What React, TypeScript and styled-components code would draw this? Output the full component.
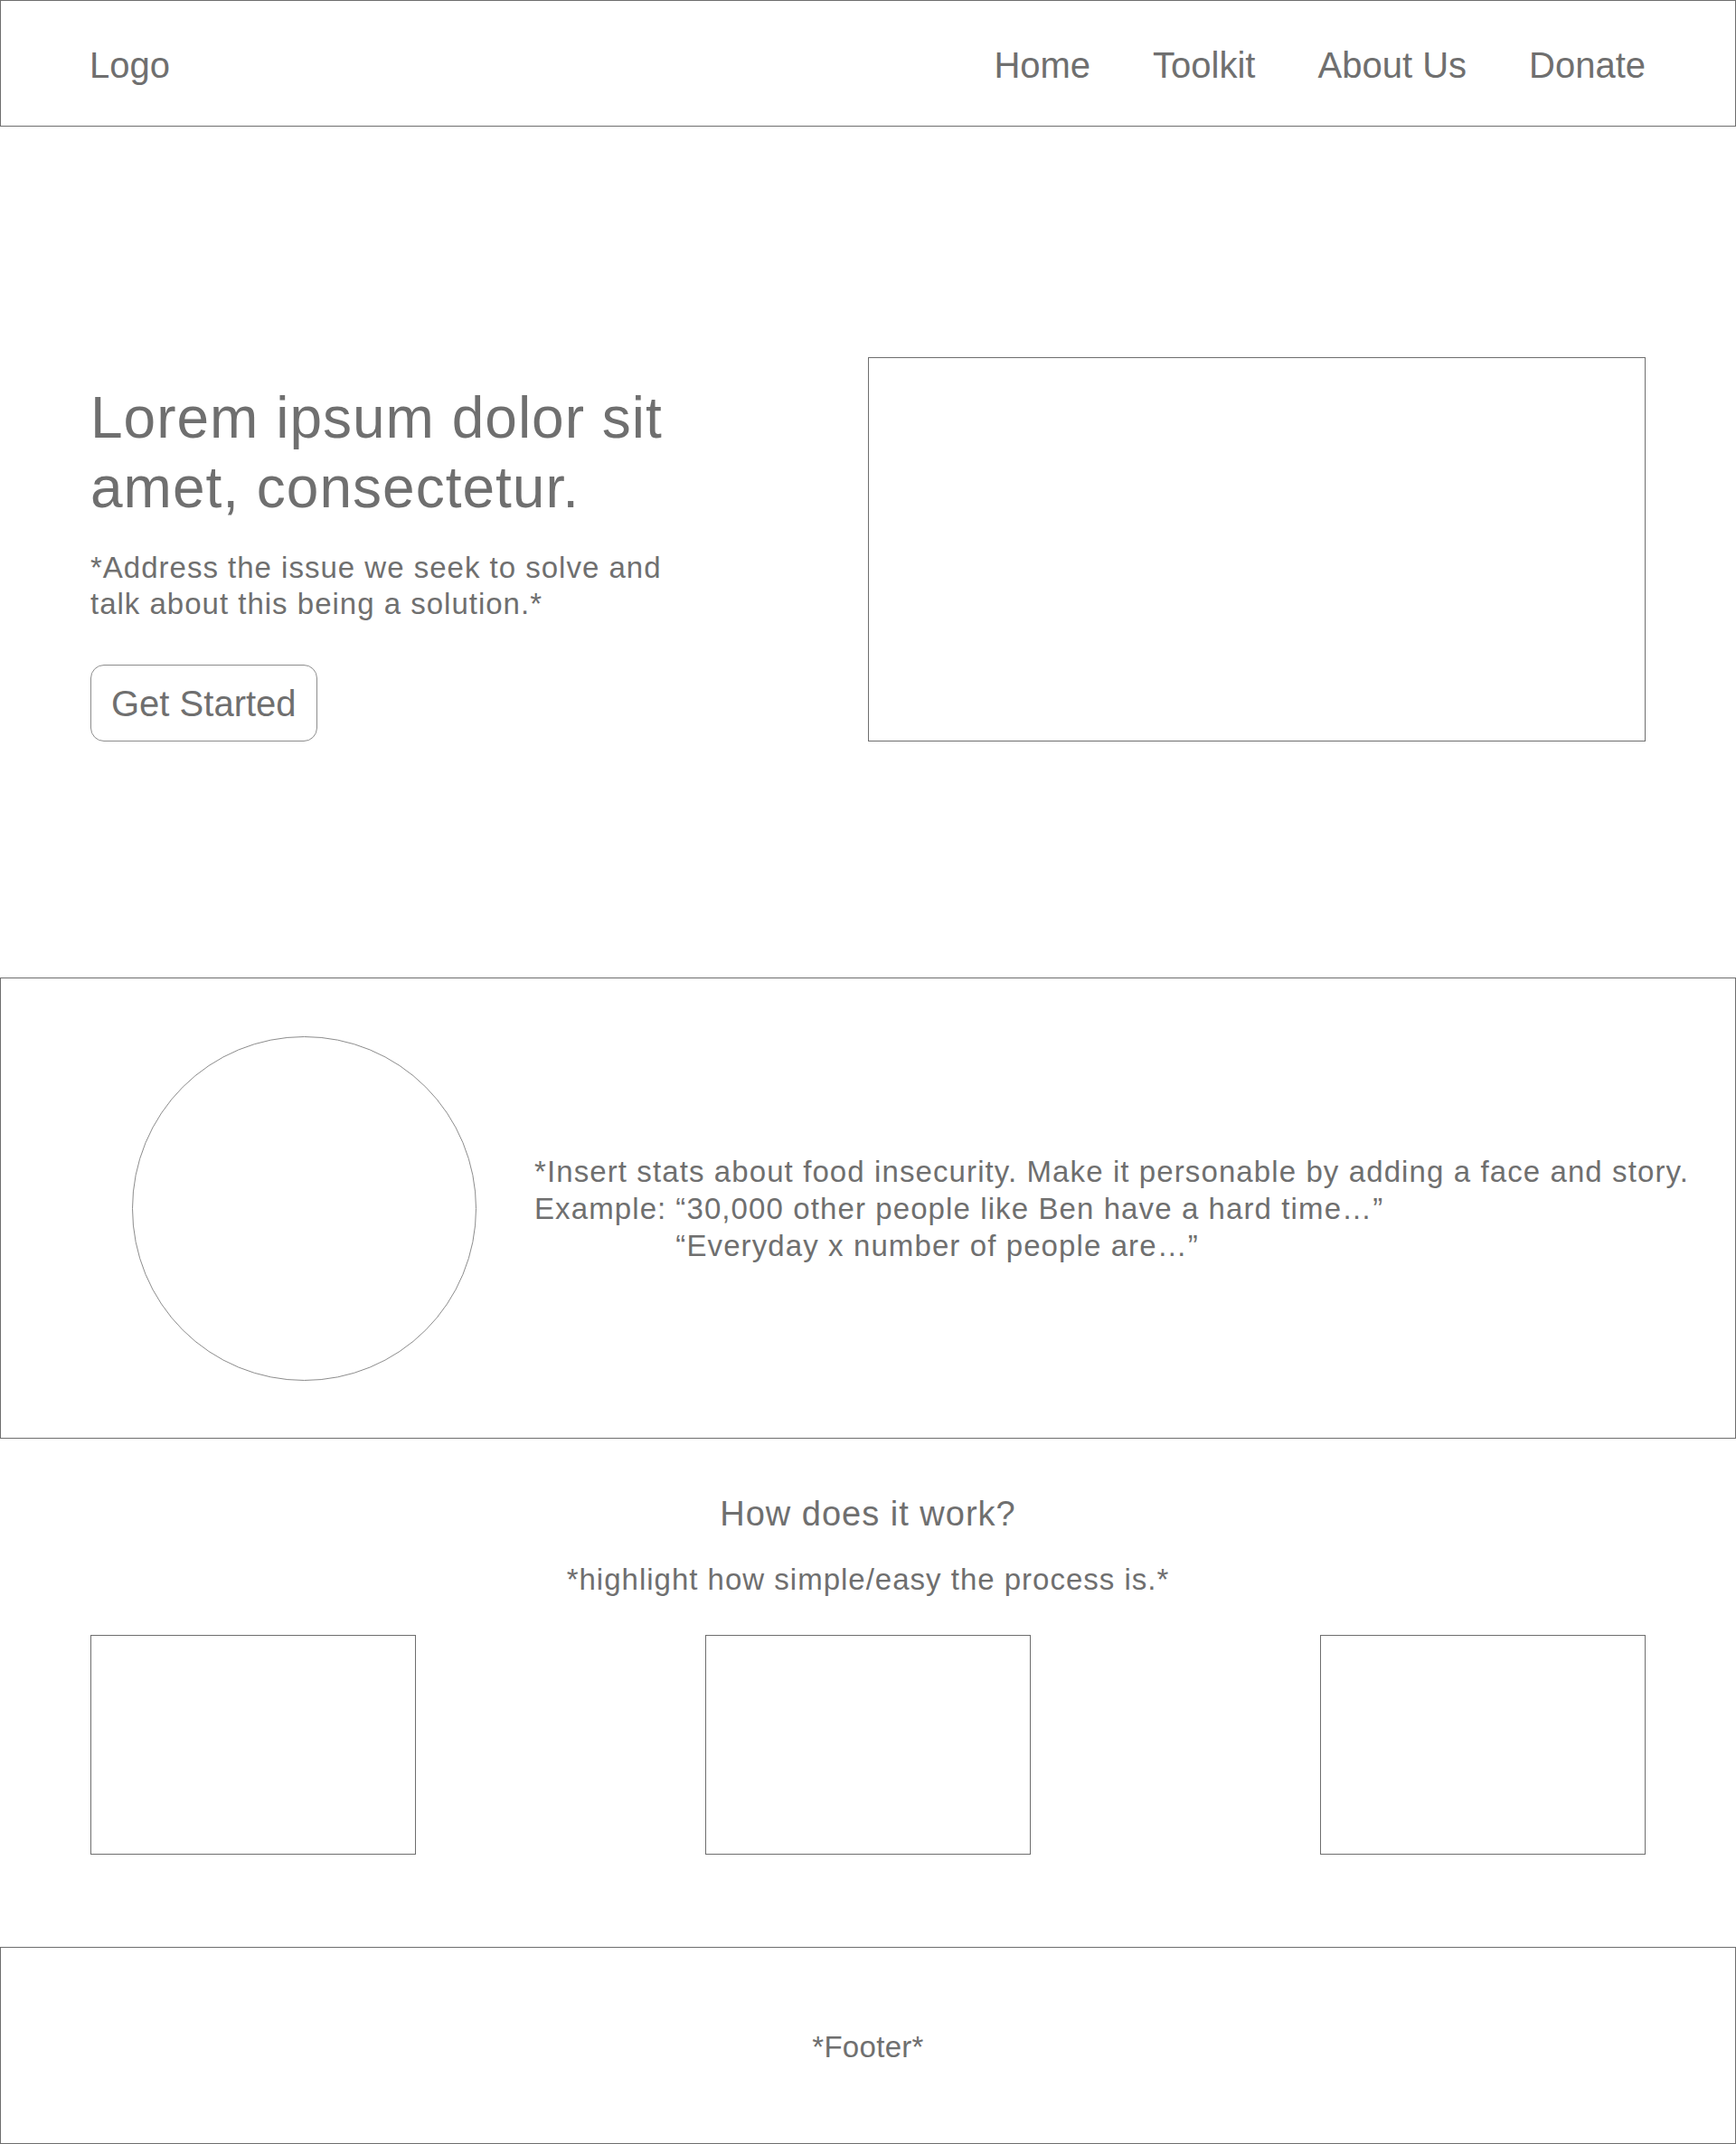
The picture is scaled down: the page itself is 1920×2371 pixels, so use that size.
import React from "react";
import styled, { createGlobalStyle } from "styled-components";

const GlobalStyle = createGlobalStyle`
  * { box-sizing: border-box; }
  html, body { margin: 0; padding: 0; background: #ffffff; }
  body {
    font-family: "Liberation Sans", Arial, Helvetica, sans-serif;
    color: #6f6f6f;
  }
`;

const Page = styled.div`
  width: 1920px;
  display: flex;
  flex-direction: column;
`;

const Header = styled.header`
  height: 140px;
  border: 1px solid #6e6e6e;
  display: flex;
  align-items: center;
  justify-content: space-between;
  padding: 4px 99px 0 98px;
`;

const Logo = styled.div`
  font-size: 40px;
  line-height: 46px;
`;

const Nav = styled.nav`
  display: flex;
  align-items: center;
  gap: 69px;
`;

const NavLink = styled.a`
  font-size: 40px;
  line-height: 46px;
  color: #6f6f6f;
  text-decoration: none;
`;

const Hero = styled.section`
  display: grid;
  grid-template-columns: 1fr 1fr;
  align-items: end;
  padding: 255px 100px 261px;
`;

const HeroText = styled.div`
  display: flex;
  flex-direction: column;
  align-items: flex-start;
  max-width: 660px;
`;

const HeroTitle = styled.h1`
  margin: 0;
  font-size: 64px;
  line-height: 77px;
  font-weight: 400;
  letter-spacing: 1px;
`;

const HeroLead = styled.p`
  margin: 30px 0 0;
  font-size: 33px;
  line-height: 40px;
  letter-spacing: 1px;
`;

const Button = styled.button`
  margin-top: 47px;
  height: 85px;
  padding: 0 22px;
  border: 1px solid #8c8c8c;
  border-radius: 15px;
  background: transparent;
  color: #6f6f6f;
  font-family: inherit;
  font-size: 40px;
  line-height: 46px;
  cursor: pointer;
`;

const MediaBox = styled.div`
  height: 425px;
  border: 1px solid #6e6e6e;
`;

const Stats = styled.section`
  height: 510px;
  border: 1px solid #6e6e6e;
  display: flex;
  align-items: center;
  padding-left: 145px;
  gap: 64px;
`;

const Avatar = styled.div`
  width: 381px;
  height: 381px;
  flex: none;
  border-radius: 50%;
  border: 1px solid #8c8c8c;
`;

const StatsText = styled.div`
  display: grid;
  grid-template-columns: auto 1fr;
  column-gap: 10px;
  font-size: 33px;
  line-height: 41px;
  letter-spacing: 1.1px;
  white-space: nowrap;
`;

const FullLine = styled.div`
  grid-column: 1 / -1;
`;

const Cell = styled.div``;

const HowSection = styled.section`
  display: flex;
  flex-direction: column;
  align-items: center;
  padding: 61px 100px 102px;
`;

const HowTitle = styled.h2`
  margin: 0;
  font-size: 38px;
  line-height: 44px;
  font-weight: 400;
  letter-spacing: 1px;
`;

const HowSub = styled.p`
  margin: 31px 0 0;
  font-size: 33px;
  line-height: 40px;
  letter-spacing: 1px;
`;

const Cards = styled.div`
  align-self: stretch;
  margin-top: 41px;
  display: flex;
  justify-content: space-between;
`;

const Card = styled.div`
  width: 360px;
  height: 243px;
  border: 1px solid #6e6e6e;
`;

const Footer = styled.footer`
  height: 218px;
  border: 1px solid #6e6e6e;
  display: flex;
  align-items: center;
  justify-content: center;
  padding-top: 3px;
  font-size: 33px;
  line-height: 40px;
  letter-spacing: 0.3px;
`;

export default function App() {
  return (
    <>
      <GlobalStyle />
      <Page>
        <Header>
          <Logo>Logo</Logo>
          <Nav>
            <NavLink href="#">Home</NavLink>
            <NavLink href="#">Toolkit</NavLink>
            <NavLink href="#">About Us</NavLink>
            <NavLink href="#">Donate</NavLink>
          </Nav>
        </Header>

        <Hero>
          <HeroText>
            <HeroTitle>Lorem ipsum dolor sit amet, consectetur.</HeroTitle>
            <HeroLead>
              *Address the issue we seek to solve and talk about this being a solution.*
            </HeroLead>
            <Button>Get Started</Button>
          </HeroText>
          <MediaBox />
        </Hero>

        <Stats>
          <Avatar />
          <StatsText>
            <FullLine>
              *Insert stats about food insecurity. Make it personable by adding a face and story.
            </FullLine>
            <Cell>Example:</Cell>
            <Cell>“30,000 other people like Ben have a hard time…”</Cell>
            <Cell />
            <Cell>“Everyday x number of people are…”</Cell>
          </StatsText>
        </Stats>

        <HowSection>
          <HowTitle>How does it work?</HowTitle>
          <HowSub>*highlight how simple/easy the process is.*</HowSub>
          <Cards>
            <Card />
            <Card />
            <Card />
          </Cards>
        </HowSection>

        <Footer>*Footer*</Footer>
      </Page>
    </>
  );
}
